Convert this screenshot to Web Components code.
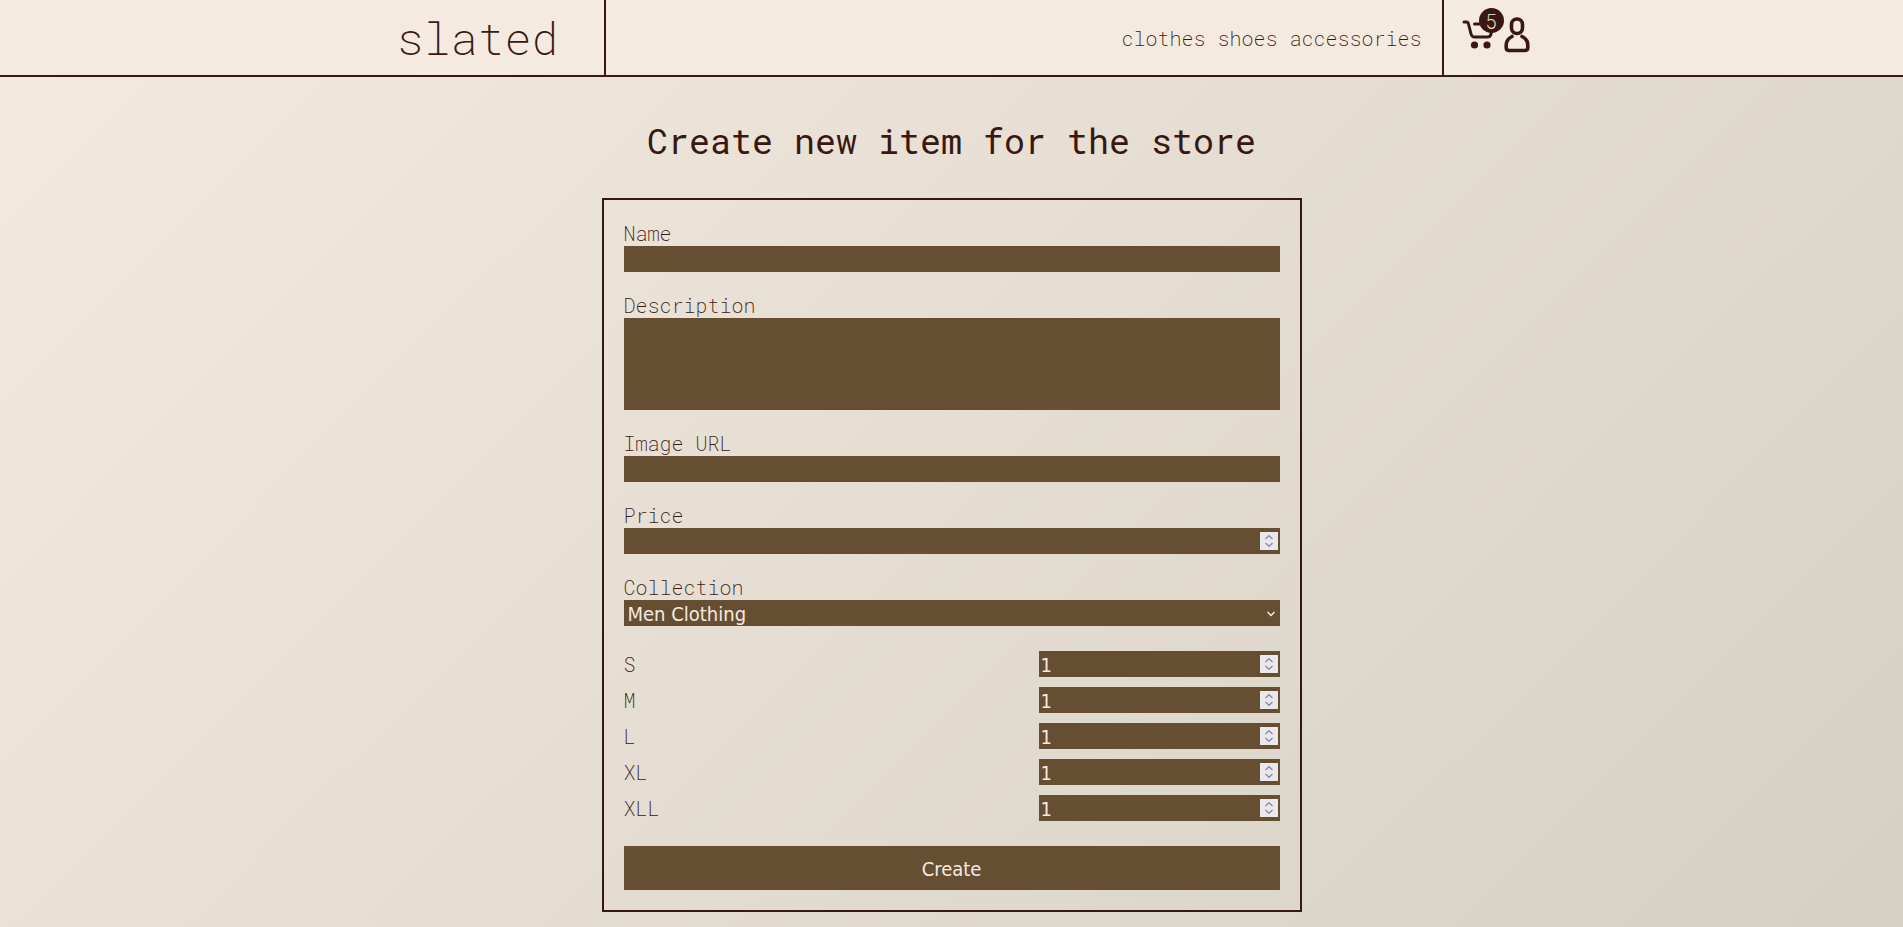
<!DOCTYPE html>
<html lang="en">
<head>
<meta charset="utf-8">
<meta name="viewport" content="width=device-width, initial-scale=1">
<title>slated</title>
<style>
  :root {
    --ink: #381811;
    --cream: #f4eae0;
    --brown: #664e33;
    --mono: "Roboto Mono", "Liberation Mono", monospace;
    --control: "DejaVu Sans Condensed", "Noto Sans", sans-serif;
  }
  body {
    margin: 0;
    min-height: 100vh;
    color: var(--ink);
    font: 200 20px/26px var(--mono);
    background: linear-gradient(135deg, #f4eae0, #d6d0c4) no-repeat;
  }
</style>
</head>
<body>
<store-page></store-page>
<script>
  class Base extends HTMLElement {
    constructor() {
      super();
      this.attachShadow({ mode: "open" }).innerHTML = this.template();
    }
  }

  const controlStyles = `
    *, *::before { box-sizing: border-box; }
    input, textarea, select {
      display: block; width: 100%; height: 26px; margin: 0; padding: 0 2px;
      border: 0; border-radius: 0; outline-offset: 1px;
      background: var(--brown); color: var(--cream);
      font: 400 20px/26px var(--control);
    }
    input { padding-top: 1px; }
    textarea { height: 92px; resize: none; }
    select { appearance: none; padding: 1px 4px 0; }
    input[type=number] { appearance: textfield; padding-right: 24px; }
    input::-webkit-inner-spin-button { appearance: none; margin: 0; }
    .control { display: grid; align-items: center; }
    .control > * { grid-area: 1 / 1; }
    .control svg { justify-self: end; margin-right: 2px; pointer-events: none; }
  `;
  const stepper = `<svg width="18" height="18" viewBox="0 0 18 18" aria-hidden="true">
    <rect width="18" height="18" fill="#e9e9ed"/>
    <path d="M5.500 7 9 3.800 12.500 7M5.500 11 9 14.200 12.500 11" fill="none" stroke="#8f8f9d" stroke-width="1.500"/></svg>`;
  const chevron = `<svg width="18" height="18" viewBox="0 0 18 18" aria-hidden="true">
    <path d="M7.500 8 11 11.500 14.500 8" fill="none" stroke="#f4eae0" stroke-width="1.500"/></svg>`;

  customElements.define("cart-link", class extends Base {
    template() {
      return `<style>
        :host { display: block; }
        a { display: block; position: relative; color: inherit; text-decoration: none; }
        svg { display: block; }
        span { position: absolute; left: 17px; top: -12px; width: 25px; height: 25px; border-radius: 50%;
          background: var(--ink); color: var(--cream); text-align: center; line-height: 26px; }
      </style>
      <a href="#cart" aria-label="Cart">
        <svg width="34" height="30" viewBox="0 0 34 30">
          <g fill="none" stroke="currentColor" stroke-width="3" stroke-linecap="round" stroke-linejoin="round">
            <path d="M2 2h2.500q1.500 0 2 2l2.500 10q.8 3 3.500 3h13q3 0 3.500-3l1.500-10H12.500"/></g>
          <circle cx="12.500" cy="25" r="3.600" fill="currentColor"/><circle cx="25" cy="25" r="3.600" fill="currentColor"/>
        </svg><span><slot></slot></span></a>`;
    }
  });

  customElements.define("user-link", class extends Base {
    template() {
      return `<style>
        :host { display: block; }
        a { color: inherit; } svg { display: block; }
      </style>
      <a href="#account" aria-label="Account">
        <svg width="26" height="36" viewBox="0 0 26 36" fill="none" stroke="currentColor" stroke-width="3.600" stroke-linecap="round" stroke-linejoin="round">
          <rect x="7.500" y="2" width="11" height="14.500" rx="5.500"/>
          <path d="M8 19.500Q2.200 22.500 2.200 28v2.500q0 3 3 3h15.600q3 0 3-3V28q0-5.500-5.800-8.500"/>
        </svg></a>`;
    }
  });

  customElements.define("site-header", class extends Base {
    template() {
      return `<style>
        * { box-sizing: border-box; }
        :host { display: block; background: var(--cream); border-bottom: 2px solid var(--ink); }
        .bar { display: grid; grid-template-columns: 254px 1fr 110px; max-width: 1200px; height: 75px; margin: 0 auto; }
        .bar > * { display: flex; align-items: center; }
        a { color: inherit; text-decoration: none; }
        .logo { justify-content: center; border-right: 2px solid var(--ink); font-size: 45px; line-height: 60px; }
        nav { justify-content: flex-end; gap: 12px; padding: 0 20px; }
        .icons { justify-content: center; gap: 8px; border-left: 2px solid var(--ink); padding: 0 4px 6px 0; }
      </style>
      <header class="bar">
        <a class="logo" href="#home">slated</a>
        <nav><a href="#clothes">clothes</a><a href="#shoes">shoes</a><a href="#accessories">accessories</a></nav>
        <div class="icons"><cart-link>5</cart-link><user-link></user-link></div>
      </header>`;
    }
  });

  customElements.define("form-field", class extends Base {
    template() {
      const label = this.getAttribute("label");
      const type = this.getAttribute("type") || "text";
      const value = this.getAttribute("value") || "";
      let control = `<input id="c" type="${type}" value="${value}">`;
      if (type === "textarea") control = `<textarea id="c"></textarea>`;
      if (type === "number") control += stepper;
      if (type === "select") control = `<select id="c"><option>${value}</option></select>${chevron}`;
      return `<style>${controlStyles}
        :host { display: block; }
        label { display: block; }
        :host([inline]) { display: grid; grid-template-columns: 1fr 241px; }
      </style>
      <label for="c">${label}</label><div class="control">${control}</div>`;
    }
  });

  customElements.define("item-form", class extends Base {
    template() {
      const sizes = ["S", "M", "L", "XL", "XLL"]
        .map(s => `<form-field inline type="number" label="${s}" value="1"></form-field>`).join("");
      return `<style>
        :host { display: block; box-sizing: border-box; width: 100%; max-width: 700px; border: 2px solid var(--ink); padding: 20px; }
        form { display: grid; gap: 25px; }
        .fields { display: grid; gap: 20px; }
        .sizes { display: grid; gap: 10px; }
        button { height: 44px; padding: 2px 0 0; border: 0; background: var(--brown); color: var(--cream);
          font: 400 20px/24px var(--control); cursor: pointer; }
      </style>
      <form>
        <div class="fields">
          <form-field label="Name"></form-field>
          <form-field label="Description" type="textarea"></form-field>
          <form-field label="Image URL"></form-field>
          <form-field label="Price" type="number"></form-field>
          <form-field label="Collection" type="select" value="Men Clothing"></form-field>
        </div>
        <div class="sizes">${sizes}</div>
        <button type="button">Create</button>
      </form>`;
    }
  });

  customElements.define("store-page", class extends Base {
    template() {
      return `<style>
        :host { display: block; }
        main { display: flex; flex-direction: column; align-items: center; padding-bottom: 15px; }
        h1 { margin: 0; padding: 40px 0 35px; font-size: 35px; line-height: 46px; font-weight: 400; text-align: center; }
      </style>
      <site-header></site-header>
      <main><h1>Create new item for the store</h1><item-form></item-form></main>`;
    }
  });
</script>
</body>
</html>
